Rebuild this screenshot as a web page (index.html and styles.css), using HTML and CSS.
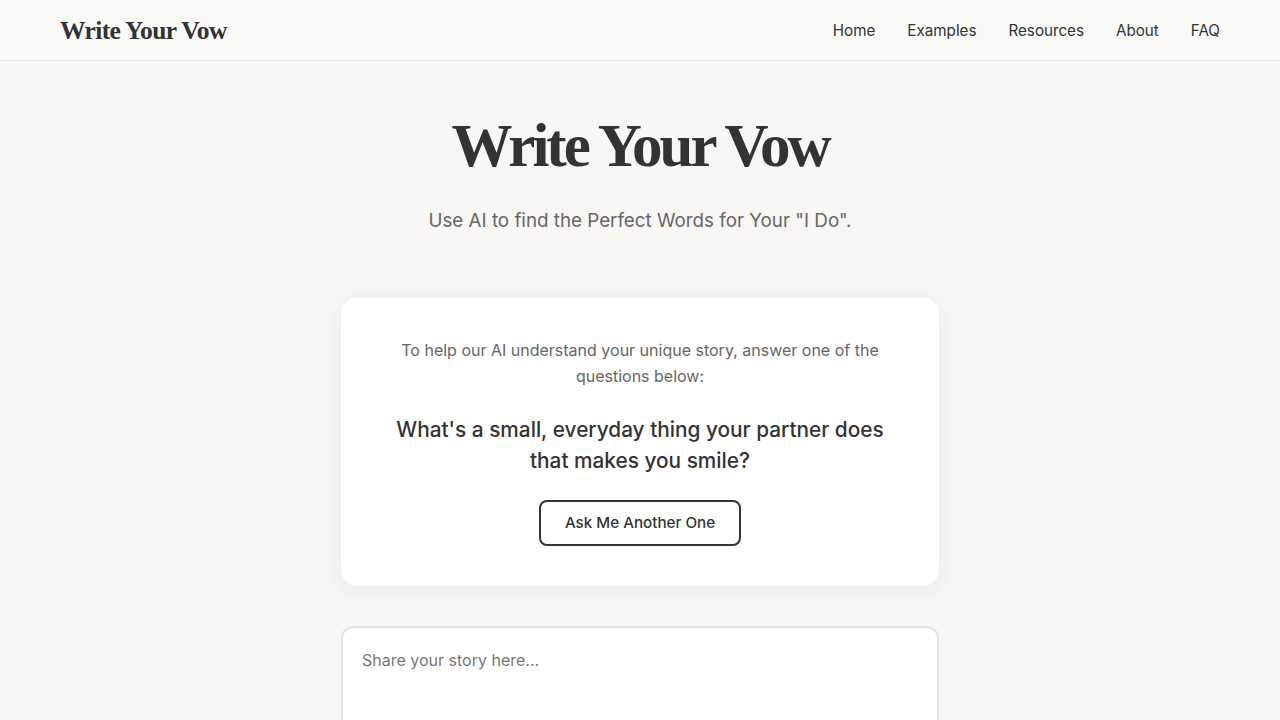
FILE: index.html
```html
<!DOCTYPE html>
<html lang="en">

<head>
	<meta charset="utf-8">
	<title>Write Your Vow</title>
	<link rel="stylesheet" href="styles.css">
</head>

<body>
	<header class="site-header">
		<a class="logo" href="#">Write Your Vow</a>
		<nav class="nav">
			<a href="#">Home</a>
			<a href="#">Examples</a>
			<a href="#">Resources</a>
			<a href="#">About</a>
			<a href="#">FAQ</a>
		</nav>
	</header>

	<main class="main">
		<h1 class="title">Write Your Vow</h1>
		<p class="subtitle">Use AI to find the Perfect Words for Your "I Do".</p>

		<section class="card">
			<p class="intro">To help our AI understand your unique story, answer one of the questions below:</p>
			<p class="question">What's a small, everyday thing your partner does that makes you smile?</p>
			<button class="btn-outline">Ask Me Another One</button>
		</section>

		<textarea class="story" placeholder="Share your story here..."></textarea>
	</main>
</body>

</html>
```

FILE: styles.css
```css
body {
	margin: 0;
	background-color: #f8f7f4;
	color: #333;
	font-family: Inter, "Noto Sans", sans-serif;
}
a {
	color: inherit;
	text-decoration: none;
}
.site-header {
	display: flex;
	align-items: center;
	justify-content: space-between;
	height: 60px;
	padding: 0 60px;
	background-color: #f9f9f6;
	border-bottom: 1px solid #e8e6e1;
}
.logo {
	font-family: "Liberation Serif", serif;
	font-weight: bold;
	font-size: 25.5px;
	letter-spacing: -0.6px;
	padding-top: 2px;
}
.nav {
	display: flex;
	gap: 32px;
	font-size: 15.2px;
}
.main {
	display: flex;
	flex-direction: column;
	align-items: center;
	padding-top: 48px;
}
.title {
	margin: 0;
	font-family: "Liberation Serif", serif;
	font-weight: bold;
	font-size: 61px;
	line-height: 1.2;
	letter-spacing: -3px;
}
.subtitle {
	margin: 25px 0 0;
	font-size: 18.8px;
	line-height: 1.5;
	color: #666;
}
.card {
	box-sizing: border-box;
	width: 598px;
	margin-top: 63px;
	padding: 40px 48px;
	background-color: white;
	border-radius: 16px;
	box-shadow: 0 4px 24px rgba(0, 0, 0, 0.07);
	text-align: center;
}
.intro {
	margin: 0;
	font-size: 16px;
	line-height: 1.6;
	color: #666;
}
.question {
	margin: 24px 0;
	font-size: 20.8px;
	font-weight: 500;
	line-height: 1.5;
	color: #333;
}
.btn-outline {
	padding: 12px 24px;
	background: white;
	color: #333;
	border: 2px solid #333;
	border-radius: 8px;
	font-family: inherit;
	font-size: 15.2px;
	font-weight: 500;
	line-height: 18px;
}
.story {
	box-sizing: border-box;
	width: 598px;
	height: 160px;
	margin-top: 40px;
	padding: 20px 19px;
	background: white;
	border: 2px solid #e6e4df;
	border-radius: 12px;
	font-family: inherit;
	font-size: 16px;
	line-height: 1.6;
	color: #333;
	resize: none;
}
.story::placeholder {
	color: #777;
}
```
